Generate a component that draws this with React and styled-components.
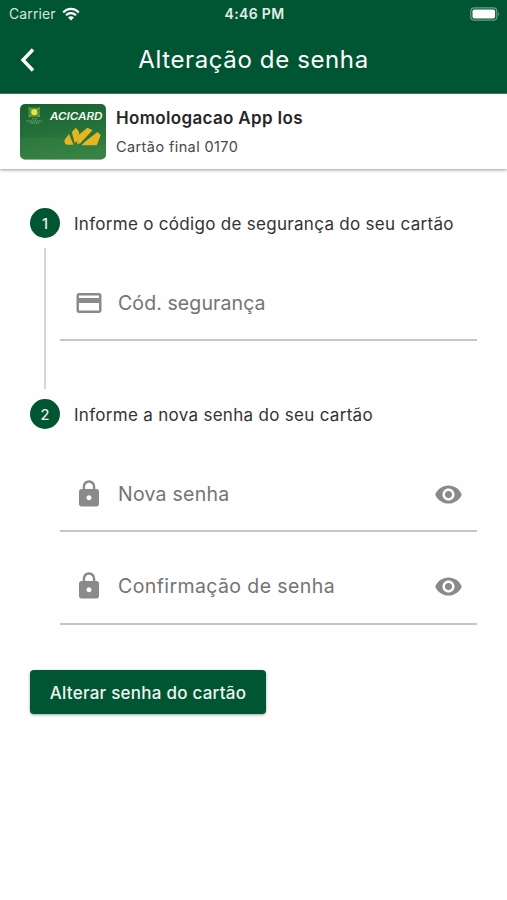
import React from "react"
import styled, { createGlobalStyle } from "styled-components"
import { MdCreditCard, MdLock, MdVisibility } from "react-icons/md"

const GlobalStyle = createGlobalStyle`
  * {
    box-sizing: border-box;
  }
  body {
    margin: 0;
    background: #fefefe;
    font-family: "Inter", "Liberation Sans", sans-serif;
  }
`;

const Screen = styled.div`
  width: 507px;
  height: 900px;
  overflow: hidden;
`;

const TopBar = styled.header`
  height: 94px;
  background: #005532;
  color: #ffffff;
  border-bottom: 1px solid #3f7f62;
`;

const StatusBar = styled.div`
  display: grid;
  grid-template-columns: 1fr auto 1fr;
  align-items: center;
  height: 27px;
  padding: 0 7px 0 9px;
`;

const Carrier = styled.div`
  display: flex;
  align-items: center;
  gap: 6px;
  font-size: 14px;
  letter-spacing: 0.1px;
  color: #d5e5dc;
`;

const Clock = styled.div`
  font-size: 14px;
  font-weight: 600;
  letter-spacing: 0.35px;
  color: #e3eee8;
`;

const Battery = styled.svg`
  justify-self: end;
`;

const NavBar = styled.div`
  display: grid;
  grid-template-columns: 40px 1fr 40px;
  align-items: center;
  height: 66px;
  padding: 0 7px;
`;

const BackButton = styled.button`
  display: flex;
  justify-content: center;
  padding: 0;
  border: 0;
  background: none;
`;

const Title = styled.h1`
  margin: 0;
  text-align: center;
  font-size: 24px;
  font-weight: 400;
  line-height: 30px;
  letter-spacing: 0.62px;
  white-space: nowrap;
`;

const Account = styled.section`
  display: flex;
  align-items: flex-start;
  gap: 10px;
  height: 75px;
  padding: 10px 20px 0;
  background: #ffffff;
  box-shadow: 0 1px 3px rgba(0, 0, 0, 0.4);
`;

const AccountText = styled.div`
  padding-top: 2px;
`;

const Name = styled.div`
  font-size: 17px;
  font-weight: 600;
  line-height: 24px;
  letter-spacing: 0.33px;
  color: #262626;
`;

const CardNumber = styled.div`
  margin-top: 7px;
  font-size: 14.5px;
  line-height: 20px;
  letter-spacing: 0.4px;
  color: #484848;
`;

const Steps = styled.main`
  padding: 39px 30px 0;
`;

const Step = styled.section`
  display: grid;
  grid-template-columns: 30px 1fr;
  height: ${props => props.height}px;
`;

const Rail = styled.div`
  display: flex;
  flex-direction: column;
  align-items: center;
`;

const StepNumber = styled.div`
  display: flex;
  align-items: center;
  justify-content: center;
  width: 30px;
  height: 30px;
  flex: none;
  border-radius: 50%;
  background: #005532;
  color: #e6f0eb;
  font-size: 14.5px;
  font-weight: 500;
`;

const RailLine = styled.div`
  width: 2px;
  height: 141px;
  margin-top: 10px;
  background: #d6d6d6;
`;

const StepTitle = styled.h2`
  margin: 0 0 11px 14px;
  padding-top: 1px;
  font-size: 17px;
  font-weight: 400;
  line-height: 30px;
  letter-spacing: 0.3px;
  color: #333333;
  white-space: nowrap;
`;

const Field = styled.label`
  display: flex;
  align-items: center;
  height: ${props => props.height}px;
  padding: 17px 14px 0;
  border-bottom: 2px solid #c6c6c6;
  color: #8a8a8a;
`;

const Placeholder = styled.span`
  flex: 1;
  margin-left: 14px;
  font-size: 19.5px;
  line-height: 26px;
  letter-spacing: ${props => props.spacing}px;
  color: #747474;
  white-space: nowrap;
`;

const SubmitButton = styled.button`
  display: block;
  width: 236px;
  height: 44px;
  padding: 2px 0 0;
  border: 0;
  border-radius: 4px;
  background: #005532;
  box-shadow: 0 1px 3px rgba(0, 0, 0, 0.35);
  color: #eef5f1;
  font-family: inherit;
  font-size: 17px;
  font-weight: 500;
  letter-spacing: 0.25px;
`;

const WifiIcon = () => (
  <svg width="18" height="14" viewBox="0 0 18 14">
    <path d="M1.2 5.4C5.6 0.8 12.4 0.8 16.8 5.4" fill="none" stroke="#ffffff" strokeWidth="2.2" />
    <path d="M4 8.3C6.9 5.5 11.1 5.5 14 8.3" fill="none" stroke="#ffffff" strokeWidth="2.2" />
    <path d="M6 10.4Q9 8 12 10.4L9 13.6Z" fill="#ffffff" />
  </svg>
);

const BankCard = () => (
  <svg width="86" height="56" viewBox="0 0 86 56">
    <defs>
      <linearGradient id="cardFill" x1="0" y1="0" x2="0.25" y2="1">
        <stop offset="0" stopColor="#17602f" />
        <stop offset="0.55" stopColor="#24703a" />
        <stop offset="1" stopColor="#338043" />
      </linearGradient>
    </defs>
    <rect width="86" height="55.5" rx="5" fill="url(#cardFill)" />
    <path d="M0 35Q30 30 56 38T86 38V50.5A5 5 0 0 1 81 55.5H5A5 5 0 0 1 0 50.5Z" fill="#3b8546" opacity="0.35" />
    <rect x="8.5" y="3.5" width="11.5" height="9.5" fill="#4c8f3d" />
    <path d="M8.5 3.5L12 6M20 3.5L16.5 6M8.5 13L12 10.5M20 13L16.5 10.5" stroke="#8fb85a" strokeWidth="0.8" />
    <circle cx="14.3" cy="8.2" r="3.1" fill="#f0e03c" />
    <path d="M12 14.8h5M6.5 17h16M10 19h9" stroke="#8fb896" strokeWidth="0.8" strokeDasharray="1.5 0.5" />
    <text
      x="30"
      y="16"
      textLength="52.5"
      lengthAdjust="spacingAndGlyphs"
      fill="#f3f8f4"
      fontFamily="Inter, sans-serif"
      fontSize="10"
      fontWeight="600"
      fontStyle="italic"
    >
      ACICARD
    </text>
    <g fill="#e6b522">
      <path d="M44.8 35.5L49 30L53.5 40.8H47Q43.5 39.5 44.8 35.5Z" />
      <path d="M51.8 28L56 23.8L59.2 28L57.7 37.5L54.5 38.5Z" />
      <path d="M57 40L58.5 31L67.5 23.8L72.5 26.2L60 39.5Z" />
      <path d="M61.5 41.2L65 37.5L77.5 28L80.7 31L76.8 41.2Z" />
    </g>
    <path d="M60 41L74.5 27.5" stroke="#24703a" strokeWidth="1" />
  </svg>
);

const steps = [
  {
    title: "Informe o código de segurança do seu cartão",
    height: 191,
    line: true,
    fields: [{ label: "Cód. segurança", spacing: 0.1, icon: MdCreditCard, height: 91 }],
  },
  {
    title: "Informe a nova senha do seu cartão",
    height: 271,
    fields: [
      { label: "Nova senha", spacing: 0.25, icon: MdLock, height: 91, secret: true },
      { label: "Confirmação de senha", spacing: 0.4, icon: MdLock, height: 93, secret: true },
    ],
  },
];

const App = () => (
  <Screen>
    <GlobalStyle />
    <TopBar>
      <StatusBar>
        <Carrier>
          Carrier
          <WifiIcon />
        </Carrier>
        <Clock>4:46 PM</Clock>
        <Battery width="30" height="14" viewBox="0 0 30 14">
          <rect x="0.8" y="0.8" width="26" height="12.4" rx="3.5" fill="none" stroke="#6f9f88" strokeWidth="1.2" />
          <rect x="2.5" y="2.5" width="22.6" height="9" rx="1.8" fill="#ffffff" />
          <path d="M28 5Q30 7 28 9Z" fill="#6f9f88" />
        </Battery>
      </StatusBar>
      <NavBar>
        <BackButton aria-label="Voltar">
          <svg width="16" height="26" viewBox="0 0 16 26">
            <path d="M14 2.5L4 13L14 23.5" fill="none" stroke="#ffffff" strokeWidth="3.4" />
          </svg>
        </BackButton>
        <Title>Alteração de senha</Title>
      </NavBar>
    </TopBar>
    <Account>
      <BankCard />
      <AccountText>
        <Name>Homologacao App Ios</Name>
        <CardNumber>Cartão final 0170</CardNumber>
      </AccountText>
    </Account>
    <Steps>
      {steps.map((step, index) => (
        <Step key={step.title} height={step.height}>
          <Rail>
            <StepNumber>{index + 1}</StepNumber>
            {step.line && <RailLine />}
          </Rail>
          <div>
            <StepTitle>{step.title}</StepTitle>
            {step.fields.map(({ label, spacing, icon: Icon, height, secret }) => (
              <Field key={label} height={height}>
                <Icon size={30} />
                <Placeholder spacing={spacing}>{label}</Placeholder>
                {secret && <MdVisibility size={29} />}
              </Field>
            ))}
          </div>
        </Step>
      ))}
      <SubmitButton>Alterar senha do cartão</SubmitButton>
    </Steps>
  </Screen>
);

export default App;
